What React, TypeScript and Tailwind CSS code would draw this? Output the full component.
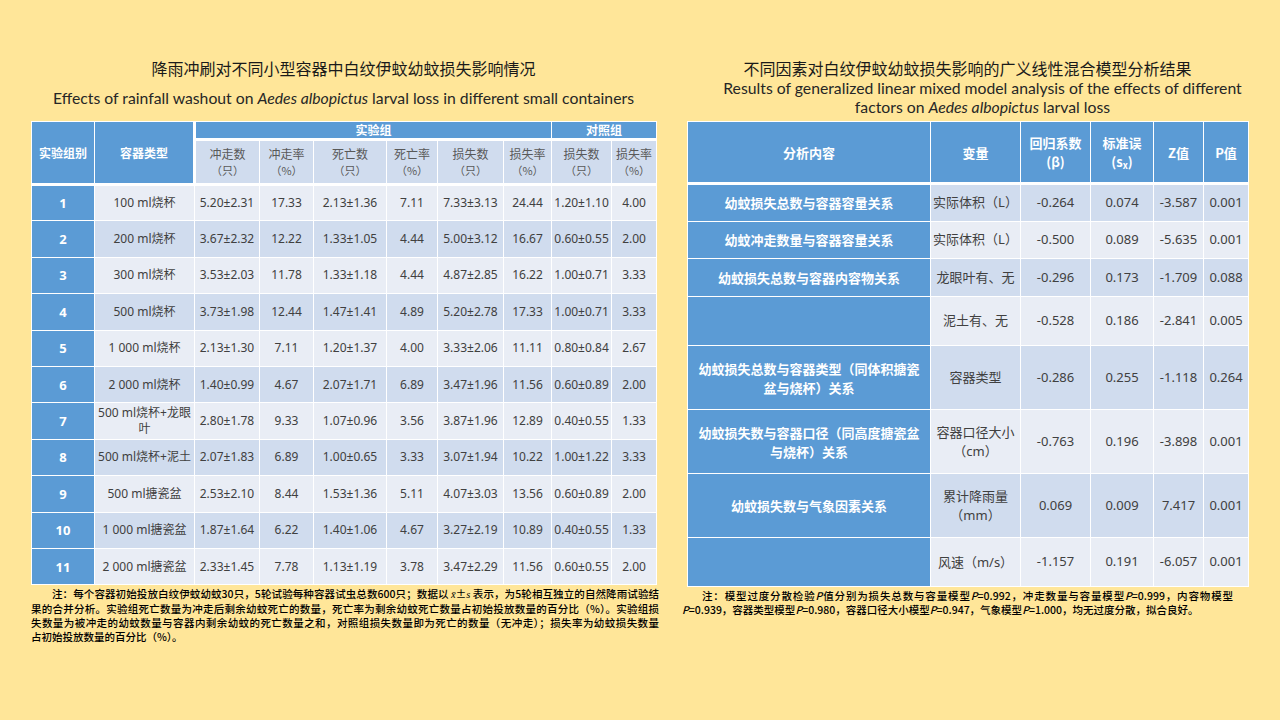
import React from 'react';

const cjk = "font-['Noto_Sans_CJK_SC',sans-serif]";
const num = "font-['Noto_Sans','Noto_Sans_CJK_SC',sans-serif]";

const leftCols = [63, 100, 65, 54, 73, 51, 66, 48, 60, 45];
const rightCols = [243, 90, 70, 63, 50, 45];

const subHeads = [
  ['冲走数', '（只）'],
  ['冲走率', '（%）'],
  ['死亡数', '（只）'],
  ['死亡率', '（%）'],
  ['损失数', '（只）'],
  ['损失率', '（%）'],
  ['损失数', '（只）'],
  ['损失率', '（%）'],
];

const leftRows = [
  ['1', '100 ml烧杯', '5.20±2.31', '17.33', '2.13±1.36', '7.11', '7.33±3.13', '24.44', '1.20±1.10', '4.00'],
  ['2', '200 ml烧杯', '3.67±2.32', '12.22', '1.33±1.05', '4.44', '5.00±3.12', '16.67', '0.60±0.55', '2.00'],
  ['3', '300 ml烧杯', '3.53±2.03', '11.78', '1.33±1.18', '4.44', '4.87±2.85', '16.22', '1.00±0.71', '3.33'],
  ['4', '500 ml烧杯', '3.73±1.98', '12.44', '1.47±1.41', '4.89', '5.20±2.78', '17.33', '1.00±0.71', '3.33'],
  ['5', '1 000 ml烧杯', '2.13±1.30', '7.11', '1.20±1.37', '4.00', '3.33±2.06', '11.11', '0.80±0.84', '2.67'],
  ['6', '2 000 ml烧杯', '1.40±0.99', '4.67', '2.07±1.71', '6.89', '3.47±1.96', '11.56', '0.60±0.89', '2.00'],
  ['7', '500 ml烧杯+龙眼叶', '2.80±1.78', '9.33', '1.07±0.96', '3.56', '3.87±1.96', '12.89', '0.40±0.55', '1.33'],
  ['8', '500 ml烧杯+泥土', '2.07±1.83', '6.89', '1.00±0.65', '3.33', '3.07±1.94', '10.22', '1.00±1.22', '3.33'],
  ['9', '500 ml搪瓷盆', '2.53±2.10', '8.44', '1.53±1.36', '5.11', '4.07±3.03', '13.56', '0.60±0.89', '2.00'],
  ['10', '1 000 ml搪瓷盆', '1.87±1.64', '6.22', '1.40±1.06', '4.67', '3.27±2.19', '10.89', '0.40±0.55', '1.33'],
  ['11', '2 000 ml搪瓷盆', '2.33±1.45', '7.78', '1.13±1.19', '3.78', '3.47±2.29', '11.56', '0.60±0.55', '2.00'],
];

const rightRows = [
  { h: 'h-[37.5px]', label: '幼蚊损失总数与容器容量关系', v: '实际体积（L）', n: ['-0.264', '0.074', '-3.587', '0.001'] },
  { h: 'h-[37.5px]', label: '幼蚊冲走数量与容器容量关系', v: '实际体积（L）', n: ['-0.500', '0.089', '-5.635', '0.001'] },
  { h: 'h-[37.5px]', label: '幼蚊损失总数与容器内容物关系', v: '龙眼叶有、无', n: ['-0.296', '0.173', '-1.709', '0.088'] },
  { h: 'h-[49.5px]', label: '', v: '泥土有、无', n: ['-0.528', '0.186', '-2.841', '0.005'] },
  { h: 'h-[64px]', label: '幼蚊损失总数与容器类型（同体积搪瓷盆与烧杯）关系', v: '容器类型', n: ['-0.286', '0.255', '-1.118', '0.264'] },
  { h: 'h-[64px]', label: '幼蚊损失数与容器口径（同高度搪瓷盆与烧杯）关系', v: '容器口径大小（cm）', n: ['-0.763', '0.196', '-3.898', '0.001'] },
  { h: 'h-[64px]', label: '幼蚊损失数与气象因素关系', v: '累计降雨量（mm）', n: ['0.069', '0.009', '7.417', '0.001'] },
  { h: 'h-[49px]', label: '', v: '风速（m/s）', n: ['-1.157', '0.191', '-6.057', '0.001'] },
];

function LeftTable() {
  return (
    <table className={'table-fixed border-collapse border border-white w-[625px] text-[12px] text-[#404040] ' + num}>
      <colgroup>
        {leftCols.map((w, i) => (
          <col key={i} style={{ width: w }} />
        ))}
      </colgroup>
      <thead className={cjk}>
        <tr className="h-[17px]">
          <th rowSpan={2} className="bg-[#5b9bd5] text-white font-bold border border-white border-b-[3px]">实验组别</th>
          <th rowSpan={2} className="bg-[#5b9bd5] text-white font-bold border border-white border-b-[3px] border-r-[3px]">容器类型</th>
          <th colSpan={6} className="bg-[#5b9bd5] text-white font-bold leading-[16px] border border-white border-b-[3px]">实验组</th>
          <th colSpan={2} className="bg-[#5b9bd5] text-white font-bold leading-[16px] border border-white border-b-[3px]">对照组</th>
        </tr>
        <tr className="h-[45px]">
          {subHeads.map(([a, b], i) => (
            <th key={i} className="bg-[#d0dcee] font-normal text-[#595959] leading-[16px] border border-white border-b-[3px]">
              <div>{a}</div>
              <div className="text-[11px]">{b}</div>
            </th>
          ))}
        </tr>
      </thead>
      <tbody>
        {leftRows.map((r, ri) => (
          <tr key={ri} className="h-[36.4px]">
            {r.map((c, ci) => (
              <td
                key={ci}
                className={
                  'border border-white text-center leading-[16px] px-[2px] ' +
                  (ci === 0
                    ? 'bg-[#5b9bd5] text-white font-bold text-[13px]'
                    : ri % 2 === 0
                    ? 'bg-[#e9edf5]'
                    : 'bg-[#d0dcee]')
                }
              >
                {c}
              </td>
            ))}
          </tr>
        ))}
      </tbody>
    </table>
  );
}

function RightTable() {
  return (
    <table className={'table-fixed border-collapse border border-white w-[561px] text-[13px] text-[#404040] ' + num}>
      <colgroup>
        {rightCols.map((w, i) => (
          <col key={i} style={{ width: w }} />
        ))}
      </colgroup>
      <thead>
        <tr className={'h-[62px] bg-[#5b9bd5] text-white font-bold leading-[19px] ' + cjk}>
          <th className="border border-white border-b-[3px]">分析内容</th>
          <th className="border border-white border-b-[3px]">变量</th>
          <th className="border border-white border-b-[3px]">
            <div>回归系数</div>
            <div>(β)</div>
          </th>
          <th className="border border-white border-b-[3px]">
            <div>标准误</div>
            <div>
              (s<sub className="text-[9px]">x</sub>)
            </div>
          </th>
          <th className="border border-white border-b-[3px]">Z值</th>
          <th className="border border-white border-b-[3px]">P值</th>
        </tr>
      </thead>
      <tbody>
        {rightRows.map((r, ri) => {
          const bg = ri % 2 === 0 ? 'bg-[#d0dcee]' : 'bg-[#e9edf5]';
          return (
            <tr key={ri} className={r.h}>
              <td className={'border border-white bg-[#5b9bd5] text-white font-bold text-center leading-[19px] px-[6px] ' + cjk}>
                {r.label}
              </td>
              <td className={'border border-white text-center leading-[19px] px-[2px] ' + bg}>{r.v}</td>
              {r.n.map((n, ni) => (
                <td key={ni} className={'border border-white text-center ' + bg}>
                  {n}
                </td>
              ))}
            </tr>
          );
        })}
      </tbody>
    </table>
  );
}

export default function App() {
  const jl = 'text-justify [text-align-last:justify]';
  return (
    <div className={'w-[1280px] h-[720px] bg-[#ffe699] flex pl-[31px] gap-[31px] overflow-hidden ' + cjk}>
      <div className="w-[625px] flex flex-col pt-[58px]">
        <div className="h-[63px] text-center text-[#1a1a1a]">
          <div className="text-[16px] leading-[20px]">降雨冲刷对不同小型容器中白纹伊蚊幼蚊损失影响情况</div>
          <div className="mt-[10px] text-[15.75px] leading-[20px] text-[#262626] font-['Lato',sans-serif]">
            Effects of rainfall washout on <i>Aedes albopictus</i> larval loss in different small containers
          </div>
        </div>
        <LeftTable />
        <div className="mt-[2px] w-[628px] text-[10.5px] leading-[14px] text-black font-medium">
          <div className={'pl-[21px] ' + jl}>
            注：每个容器初始投放白纹伊蚊幼蚊30只，5轮试验每种容器试虫总数600只；数据以 <i className="font-['Liberation_Serif',serif]">x̄</i>±<i className="font-['Liberation_Serif',serif]">s</i> 表示，为5轮相互独立的自然降雨试验结
          </div>
          <div className={jl}>
            果的合并分析。实验组死亡数量为冲走后剩余幼蚊死亡的数量，死亡率为剩余幼蚊死亡数量占初始投放数量的百分比（%）。实验组损
          </div>
          <div className={jl}>
            失数量为被冲走的幼蚊数量与容器内剩余幼蚊的死亡数量之和，对照组损失数量即为死亡的数量（无冲走）；损失率为幼蚊损失数量
          </div>
          <div>占初始投放数量的百分比（%）。</div>
        </div>
      </div>
      <div className="w-[561px] flex flex-col pt-[58px]">
        <div className="h-[63px] text-center text-[#1a1a1a]">
          <div className="text-[16px] leading-[20px]">不同因素对白纹伊蚊幼蚊损失影响的广义线性混合模型分析结果</div>
          <div className="text-[15.75px] leading-[19px] text-[#262626] font-['Lato',sans-serif] pl-[30px]">
            Results of generalized linear mixed model analysis of the effects of different
            <br />
            factors on <i>Aedes albopictus</i> larval loss
          </div>
        </div>
        <RightTable />
        <div className="mt-[2px] -ml-[5px] w-[551px] text-[10.5px] leading-[14px] text-black font-medium">
          <div className={'pl-[20px] ' + jl}>
            注：模型过度分散检验<i>P</i>值分别为损失总数与容量模型<i>P</i>=0.992，冲走数量与容量模型<i>P</i>=0.999，内容物模型
          </div>
          <div>
            <i>P</i>=0.939，容器类型模型<i>P</i>=0.980，容器口径大小模型<i>P</i>=0.947，气象模型<i>P</i>=1.000，均无过度分散，拟合良好。
          </div>
        </div>
      </div>
    </div>
  );
}
